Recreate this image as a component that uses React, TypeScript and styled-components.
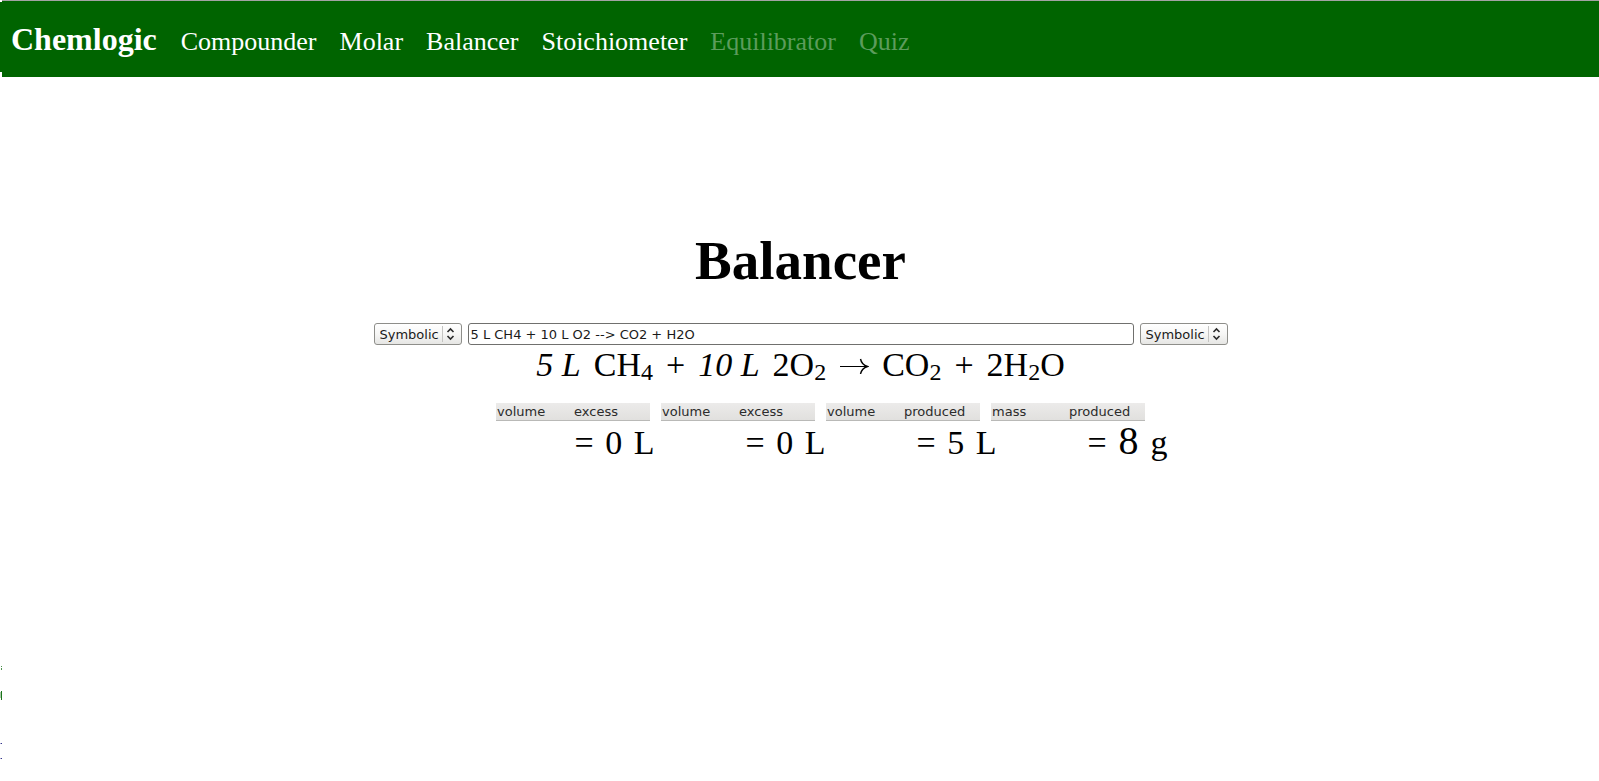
import React, { useState } from "react";
import styled, { createGlobalStyle } from "styled-components";

const serif = `"Liberation Serif", "Times New Roman", serif`;
const sans = `"DejaVu Sans", Verdana, sans-serif`;

const GlobalStyle = createGlobalStyle`
  *, *::before, *::after { box-sizing: border-box; }
  body {
    margin: 0;
    background: #fff;
    color: #000;
    font-family: ${serif};
  }
`;

const Page = styled.div`
  display: flex;
  min-height: 100vh;
`;

const Edge = styled.div`
  flex: 0 0 2px;
  display: flex;
  flex-direction: column;
  justify-content: space-between;
`;

const EdgeBar = styled.div`
  height: 70px;
  margin-top: 2px;
  background: #006400;
`;

const EdgeMarks = styled.svg`
  display: block;
`;

const Content = styled.div`
  flex: 1;
  min-width: 0;
`;

const Header = styled.header`
  display: flex;
  align-items: baseline;
  gap: 24px;
  padding: 18px 9px;
  border-top: 1px solid #a3a3a3;
  background: #006400;
`;

const Brand = styled.a`
  color: #fff;
  font-size: 32px;
  font-weight: bold;
  line-height: 40px;
  text-decoration: none;
`;

const Nav = styled.nav`
  display: flex;
  flex-wrap: wrap;
  gap: 0 23px;
`;

const NavLink = styled.a<{ $muted?: boolean }>`
  color: ${(p) => (p.$muted ? "#5c9c5c" : "#fff")};
  font-size: 26px;
  line-height: 32px;
  text-decoration: none;
`;

const Main = styled.main`
  display: flex;
  flex-direction: column;
  align-items: center;
  padding: 154px 16px 32px;
`;

const Title = styled.h1`
  margin: 0 0 32px;
  font-size: 55px;
  line-height: 60px;
`;

const EquationForm = styled.form`
  display: flex;
  gap: 6px;
  width: 100%;
  max-width: 854px;
`;

const SelectBox = styled.label`
  position: relative;
  flex: 0 0 88px;
  display: flex;
`;

const NotationSelect = styled.select`
  appearance: none;
  width: 100%;
  height: 22px;
  margin: 0;
  padding: 0 20px 0 5px;
  border: 1px solid #8e8e8a;
  border-radius: 3px;
  background: linear-gradient(#fff, #f6f6f5 50%, #e6e6e4);
  color: #1a1a1a;
  font-family: ${sans};
  font-size: 13px;
`;

const Arrows = styled.svg`
  position: absolute;
  top: 3px;
  right: 3px;
  pointer-events: none;
`;

const EquationInput = styled.input`
  flex: 1;
  min-width: 0;
  height: 22px;
  margin: 0;
  padding: 0 2px;
  border: 1px solid #70706e;
  border-radius: 3px;
  background: #fff;
  color: #1a1a1a;
  font-family: ${sans};
  font-size: 13px;
`;

const Formula = styled.div`
  display: flex;
  flex-wrap: wrap;
  justify-content: center;
  gap: 0 13px;
  margin-bottom: 18px;
  font-size: 34px;
  line-height: 40px;
`;

const Sub = styled.sub`
  position: relative;
  top: 4px;
  font-size: 24px;
  line-height: 24px;
  vertical-align: baseline;
`;

const ArrowSign = styled.svg`
  align-self: center;
`;

const Quantities = styled.div`
  display: flex;
  flex-wrap: wrap;
  justify-content: center;
  gap: 11px;
  margin-bottom: 2px;
  padding-left: 40px;
`;

const Quantity = styled.div`
  display: flex;
  width: 154px;
  height: 18px;
  border-bottom: 1px solid #b9b9b7;
  background: linear-gradient(#ecebea, #e1e0de);
`;

const PlainSelect = styled.select`
  appearance: none;
  flex: 1;
  min-width: 0;
  margin: 0;
  padding: 0 1px;
  border: 0;
  background: transparent;
  color: #2b2b2b;
  font-family: ${sans};
  font-size: 13px;
  line-height: 17px;
`;

const Results = styled.div`
  display: flex;
  gap: 91px;
  padding-left: 141px;
`;

const Result = styled.output`
  display: flex;
  align-items: baseline;
  justify-content: space-between;
  width: 80px;
  font-size: 34px;
  line-height: 40px;
`;

const Emphasis = styled.span`
  font-size: 40px;
  line-height: 32px;
`;

const notations = ["Symbolic", "Name"];

const links = [
  { label: "Compounder" },
  { label: "Molar" },
  { label: "Balancer" },
  { label: "Stoichiometer" },
  { label: "Equilibrator", muted: true },
  { label: "Quiz", muted: true },
];

const quantities = [
  { type: "volume", role: "excess", value: "0", unit: "L" },
  { type: "volume", role: "excess", value: "0", unit: "L" },
  { type: "volume", role: "produced", value: "5", unit: "L" },
  { type: "mass", role: "produced", value: "8", unit: "g", large: true },
];

function Notation({ label }: { label: string }) {
  return (
    <SelectBox>
      <NotationSelect aria-label={label} defaultValue="Symbolic">
        {notations.map((n) => (
          <option key={n}>{n}</option>
        ))}
      </NotationSelect>
      <Arrows width="17" height="16" viewBox="0 0 17 16" fill="none" aria-hidden="true">
        <path d="M.5 0v16" stroke="#c4c4c2" />
        <path d="M5.500 6l3-3 3 3M5.500 10l3 3 3-3" stroke="#2a2a2a" strokeWidth="1.6" />
      </Arrows>
    </SelectBox>
  );
}

export default function App() {
  const [equation, setEquation] = useState("5 L CH4 + 10 L O2 --> CO2 + H2O");

  return (
    <Page>
      <GlobalStyle />
      <Edge>
        <EdgeBar />
        <EdgeMarks width="2" height="115" viewBox="0 0 2 115" aria-hidden="true">
          <path d="M1 0h1v1h-1zM1 2h1v2h-1z" fill="#4f934f" />
          <path d="M0 26h1v6h-1z" fill="#a9cba9" />
          <path d="M1 25h1v9h-1z" fill="#1c751c" />
          <path d="M0 77h1v1h-1zM0 92h1v1h-1z" fill="#a6a6cc" />
          <path d="M1 77h1v1h-1zM1 92h1v1h-1z" fill="#34348c" />
        </EdgeMarks>
      </Edge>
      <Content>
        <Header>
          <Brand href="#home">Chemlogic</Brand>
          <Nav>
            {links.map((l) => (
              <NavLink key={l.label} href={`#${l.label.toLowerCase()}`} $muted={l.muted}>
                {l.label}
              </NavLink>
            ))}
          </Nav>
        </Header>
        <Main>
          <Title>Balancer</Title>
          <EquationForm onSubmit={(e) => e.preventDefault()}>
            <Notation label="Input notation" />
            <EquationInput
              type="text"
              aria-label="Equation"
              value={equation}
              onChange={(e) => setEquation(e.target.value)}
            />
            <Notation label="Output notation" />
          </EquationForm>
          <Formula>
            <em>5 L</em>
            <span>CH<Sub>4</Sub></span>
            <span>+</span>
            <em>10 L</em>
            <span>2O<Sub>2</Sub></span>
            <ArrowSign width="30" height="18" viewBox="0 0 30 18" fill="none" stroke="#000" role="img" aria-label="yields">
              <path d="M1 10.500h27" />
              <path d="M21.500 3c.8 3.800 3.200 6.300 7 7.500c-3.800 1.200-6.200 3.700-7 7.500" strokeWidth="1.4" />
            </ArrowSign>
            <span>CO<Sub>2</Sub></span>
            <span>+</span>
            <span>2H<Sub>2</Sub>O</span>
          </Formula>
          <Quantities>
            {quantities.map((q, i) => (
              <Quantity key={i}>
                <PlainSelect aria-label={`Quantity ${i + 1} type`} defaultValue={q.type}>
                  <option>volume</option>
                  <option>mass</option>
                </PlainSelect>
                <PlainSelect aria-label={`Quantity ${i + 1} role`} defaultValue={q.role}>
                  <option>excess</option>
                  <option>produced</option>
                </PlainSelect>
              </Quantity>
            ))}
          </Quantities>
          <Results>
            {quantities.map((q, i) => (
              <Result key={i}>
                <span>=</span>
                {q.large ? <Emphasis>{q.value}</Emphasis> : <span>{q.value}</span>}
                <span>{q.unit}</span>
              </Result>
            ))}
          </Results>
        </Main>
      </Content>
    </Page>
  );
}
